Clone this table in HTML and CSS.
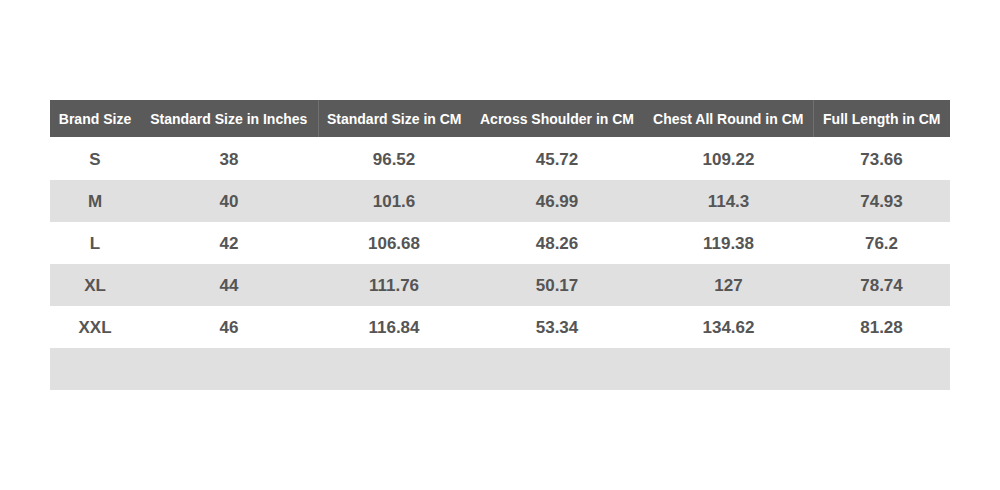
FILE: index.html
```html
<!DOCTYPE html>
<html>
<head>
<meta charset="utf-8">
<link rel="stylesheet" href="styles.css">
</head>
<body>
<div class="page">
<table class="size-table">
  <colgroup>
    <col class="c1"><col class="c2"><col class="c3"><col class="c4"><col class="c5"><col class="c6">
  </colgroup>
  <thead>
    <tr>
      <th>Brand Size</th>
      <th class="div-right">Standard Size in Inches</th>
      <th>Standard Size in CM</th>
      <th>Across Shoulder in CM</th>
      <th class="div-right">Chest All Round in CM</th>
      <th>Full Length in CM</th>
    </tr>
  </thead>
  <tbody>
    <tr><td>S</td><td>38</td><td>96.52</td><td>45.72</td><td>109.22</td><td>73.66</td></tr>
    <tr class="alt"><td>M</td><td>40</td><td>101.6</td><td>46.99</td><td>114.3</td><td>74.93</td></tr>
    <tr><td>L</td><td>42</td><td>106.68</td><td>48.26</td><td>119.38</td><td>76.2</td></tr>
    <tr class="alt"><td>XL</td><td>44</td><td>111.76</td><td>50.17</td><td>127</td><td>78.74</td></tr>
    <tr><td>XXL</td><td>46</td><td>116.84</td><td>53.34</td><td>134.62</td><td>81.28</td></tr>
    <tr class="alt"><td></td><td></td><td></td><td></td><td></td><td></td></tr>
  </tbody>
</table>
</div>
</body>
</html>
```

FILE: styles.css
```css
html, body {
  margin: 0;
  padding: 0;
  background: #ffffff;
}
.page {
  width: 1000px;
  height: 490px;
  padding: 100px 50px 0 50px;
  box-sizing: border-box;
}
.size-table {
  width: 900px;
  border-collapse: collapse;
  table-layout: fixed;
  font-family: "Liberation Sans", Arial, sans-serif;
}
.c1 { width: 90px; }
.c2 { width: 178px; }
.c3 { width: 152px; }
.c4 { width: 174px; }
.c5 { width: 169px; }
.c6 { width: 137px; }
.size-table th {
  background: #5a5a5a;
  color: #ffffff;
  font-size: 14px;
  font-weight: bold;
  height: 37px;
  padding: 1px 0 0 0;
  box-sizing: border-box;
  text-align: center;
  white-space: nowrap;
}
.size-table th.div-right {
  border-right: 1px solid #707070;
}
.size-table td {
  height: 42px;
  padding: 2px 0 0 0;
  box-sizing: border-box;
  text-align: center;
  font-size: 17px;
  font-weight: bold;
  color: #555555;
}
.size-table tbody tr:first-child td {
  height: 43px;
}
.size-table tr.alt td {
  background: #e0e0e0;
}
```
